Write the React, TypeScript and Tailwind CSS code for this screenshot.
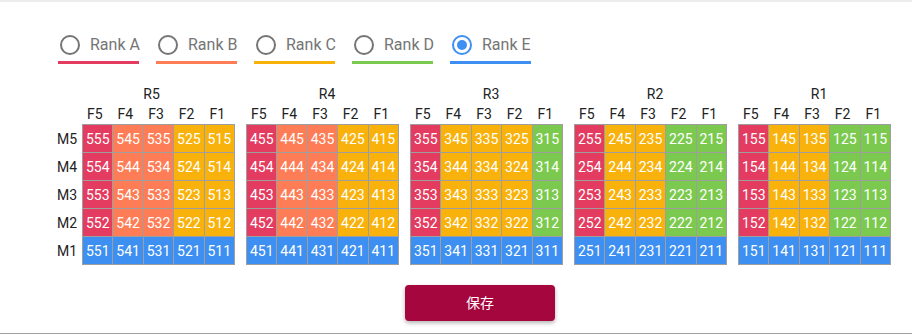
const RED = "#e33c60";
const ORANGE = "#fe7d56";
const AMBER = "#f9b20b";
const GREEN = "#7bca4f";
const BLUE = "#3d8ff1";

const ranks = [
  { label: "Rank A", color: RED, checked: false },
  { label: "Rank B", color: ORANGE, checked: false },
  { label: "Rank C", color: AMBER, checked: false },
  { label: "Rank D", color: GREEN, checked: false },
  { label: "Rank E", color: BLUE, checked: true },
];

const groups = [
  { r: 5, cols: [RED, ORANGE, ORANGE, AMBER, AMBER], head: "pr-[14px]" },
  { r: 4, cols: [RED, ORANGE, ORANGE, AMBER, AMBER], head: "pl-[9px]" },
  { r: 3, cols: [RED, AMBER, AMBER, AMBER, GREEN], head: "pl-[9px]" },
  { r: 2, cols: [RED, AMBER, AMBER, GREEN, GREEN], head: "pl-[9px]" },
  { r: 1, cols: [RED, AMBER, AMBER, GREEN, GREEN], head: "pl-[9px]" },
];

const fs = [5, 4, 3, 2, 1];
const ms = [5, 4, 3, 2, 1];

function RadioItem({ label, color, checked }: { label: string; color: string; checked: boolean }) {
  return (
    <div
      className="flex items-center gap-[10px] pl-[2px] pb-[6px] w-[81px] shrink-0 whitespace-nowrap border-b-[3px]"
      style={{ borderColor: color }}
    >
      {checked ? (
        <span className="w-5 h-5 shrink-0 rounded-full border-2 border-[#3d8ff1] flex items-center justify-center">
          <span className="w-[10px] h-[10px] rounded-full bg-[#3d8ff1]" />
        </span>
      ) : (
        <span className="w-5 h-5 shrink-0 rounded-full border-2 border-[#757575]" />
      )}
      <span className="text-base text-[#757575] leading-5">{label}</span>
    </div>
  );
}

function Group({ r, cols, head }: { r: number; cols: string[]; head: string }) {
  return (
    <div className="w-[153px] flex flex-col">
      <div className={`h-5 leading-5 text-center text-sm text-[#222] ${head}`}>R{r}</div>
      <div className="h-5 leading-5 grid grid-cols-5 text-sm text-[#222] text-center">
        {fs.map((f) => (
          <span key={f} className="pr-[5px]">
            F{f}
          </span>
        ))}
      </div>
      <div className="grid grid-cols-5 gap-px bg-[#9e9e9e] border border-[#9e9e9e]">
        {ms.map((m) =>
          fs.map((f, i) => (
            <div
              key={`${m}-${f}`}
              className="h-[27px] flex items-center justify-center text-sm text-white"
              style={{ backgroundColor: m === 1 ? BLUE : cols[i] }}
            >
              {r}
              {f}
              {m}
            </div>
          ))
        )}
      </div>
    </div>
  );
}

export default function App() {
  return (
    <div
      className="w-[912px] h-[334px] bg-white border-t-2 border-[#ececec] border-b border-b-[#a0a0a0] flex flex-col"
      style={{ fontFamily: "Roboto, 'Noto Sans CJK SC', sans-serif" }}
    >
      <div className="flex gap-[17px] pl-[58px] pt-[33px]">
        {ranks.map((rk) => (
          <RadioItem key={rk.label} {...rk} />
        ))}
      </div>

      <div className="flex pl-[53px] pt-[20px]">
        <div className="w-[29px] pr-[5px] flex flex-col text-sm text-[#222] text-right">
          <div className="h-[41px]" />
          {ms.map((m) => (
            <div key={m} className="h-[28px] leading-[28px]">
              M{m}
            </div>
          ))}
        </div>
        <div className="flex gap-[11px]">
          {groups.map((g) => (
            <Group key={g.r} {...g} />
          ))}
        </div>
      </div>

      <div className="flex pl-[405px] pt-[20px]">
        <button className="w-[150px] h-9 rounded bg-[#a5063e] text-white text-sm shadow-[0_2px_4px_rgba(0,0,0,0.3)]">
          保存
        </button>
      </div>
    </div>
  );
}
